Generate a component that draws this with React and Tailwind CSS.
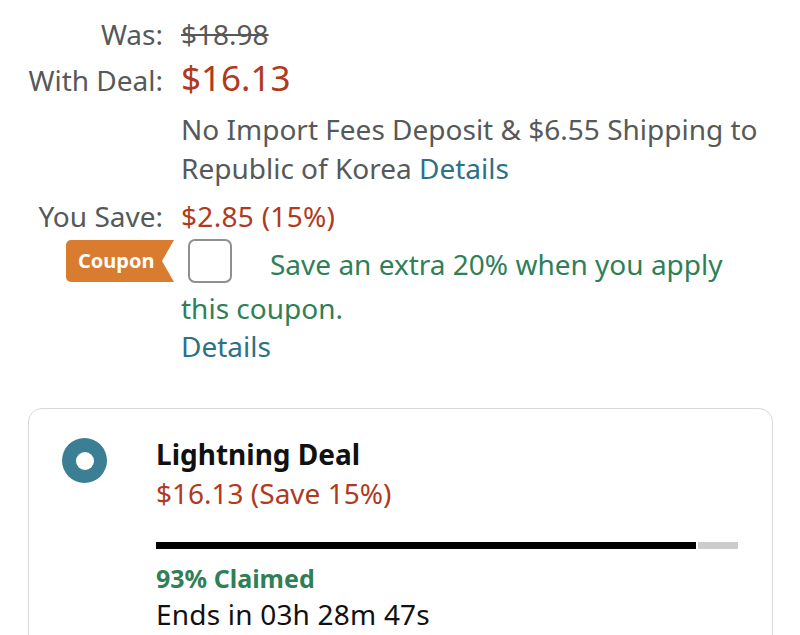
export default function App() {
  return (
    <div className="w-[800px] h-[635px] overflow-hidden bg-white text-[#565959]" style={{ fontFamily: '"Noto Sans", "Open Sans", sans-serif' }}>
      {/* Price table */}
      <div className="grid grid-cols-[163px_1fr] gap-x-[18px] pt-[14px] pr-[25px] text-[28px]">
        <div className="text-right leading-[40px]">Was:</div>
        <div className="leading-[40px] line-through">$18.98</div>

        <div className="text-right leading-[48px] self-baseline">With Deal:</div>
        <div className="leading-[48px] text-[35px] text-[#b03a1e] self-baseline">$16.13</div>

        <div />
        <div className="mt-[6px] leading-[39px]">
          No Import Fees Deposit &amp; $6.55 Shipping to Republic of Korea{' '}
          <span className="text-[#2d7189]">Details</span>
        </div>

        <div className="text-right leading-[40px] mt-[8px]">You Save:</div>
        <div className="leading-[40px] mt-[8px] text-[#b03a1e] tracking-[0.3px]">$2.85 (15%)</div>

        {/* Coupon */}
        <div className="flex justify-end items-start mt-[3px] -mr-[11px]">
          <div className="relative mt-[1px] h-[42px] w-[108px] rounded-l-[5px] bg-[#d97c2f] pl-[12px] text-[20px] font-bold leading-[42px] text-white">
            Coupon
            <svg className="absolute right-0 top-0" width="12" height="42" viewBox="0 0 12 42">
              <polygon points="12,0 0,21 12,42" fill="white" />
            </svg>
          </div>
        </div>
        <div className="mt-[3px] text-[#2f7f57] leading-[42px]">
          <span className="inline-block align-top ml-[7px] mr-[38px] h-[44px] w-[44px] rounded-[7px] border-2 border-[#8d9090] bg-white" />
          <span className="relative top-[4px]">Save an extra 20% when you apply this coupon.</span>
          <div className="text-[#2d7189]">Details</div>
        </div>
      </div>

      {/* Lightning deal card */}
      <div className="mt-[41px] ml-[28px] w-[745px] rounded-[14px] border border-[#d5d9d9] pt-[25px] pl-[33px] pr-[34px] pb-6">
        <div className="flex items-start gap-[49px]">
          <div className="mt-[4px] flex h-[45px] w-[45px] shrink-0 items-center justify-center rounded-full bg-[#3b7f95]">
            <div className="h-[18px] w-[18px] rounded-full bg-white" />
          </div>
          <div className="flex-1">
            <div className="text-[28px] font-bold leading-[40px] text-[#111]">Lightning Deal</div>
            <div className="text-[28px] leading-[38px] text-[#b03a1e]">$16.13 (Save 15%)</div>
            <div className="mt-[30px] flex h-[7px] gap-[2px]">
              <div className="w-[540px] bg-black" />
              <div className="flex-1 bg-[#cccccc]" />
            </div>
            <div className="mt-[14px] text-[25px] font-bold leading-[30px] text-[#2f7f57]">93% Claimed</div>
            <div className="text-[28px] leading-[42px] text-[#111] tracking-[0.2px]">Ends in 03h 28m 47s</div>
          </div>
        </div>
      </div>
    </div>
  )
}
